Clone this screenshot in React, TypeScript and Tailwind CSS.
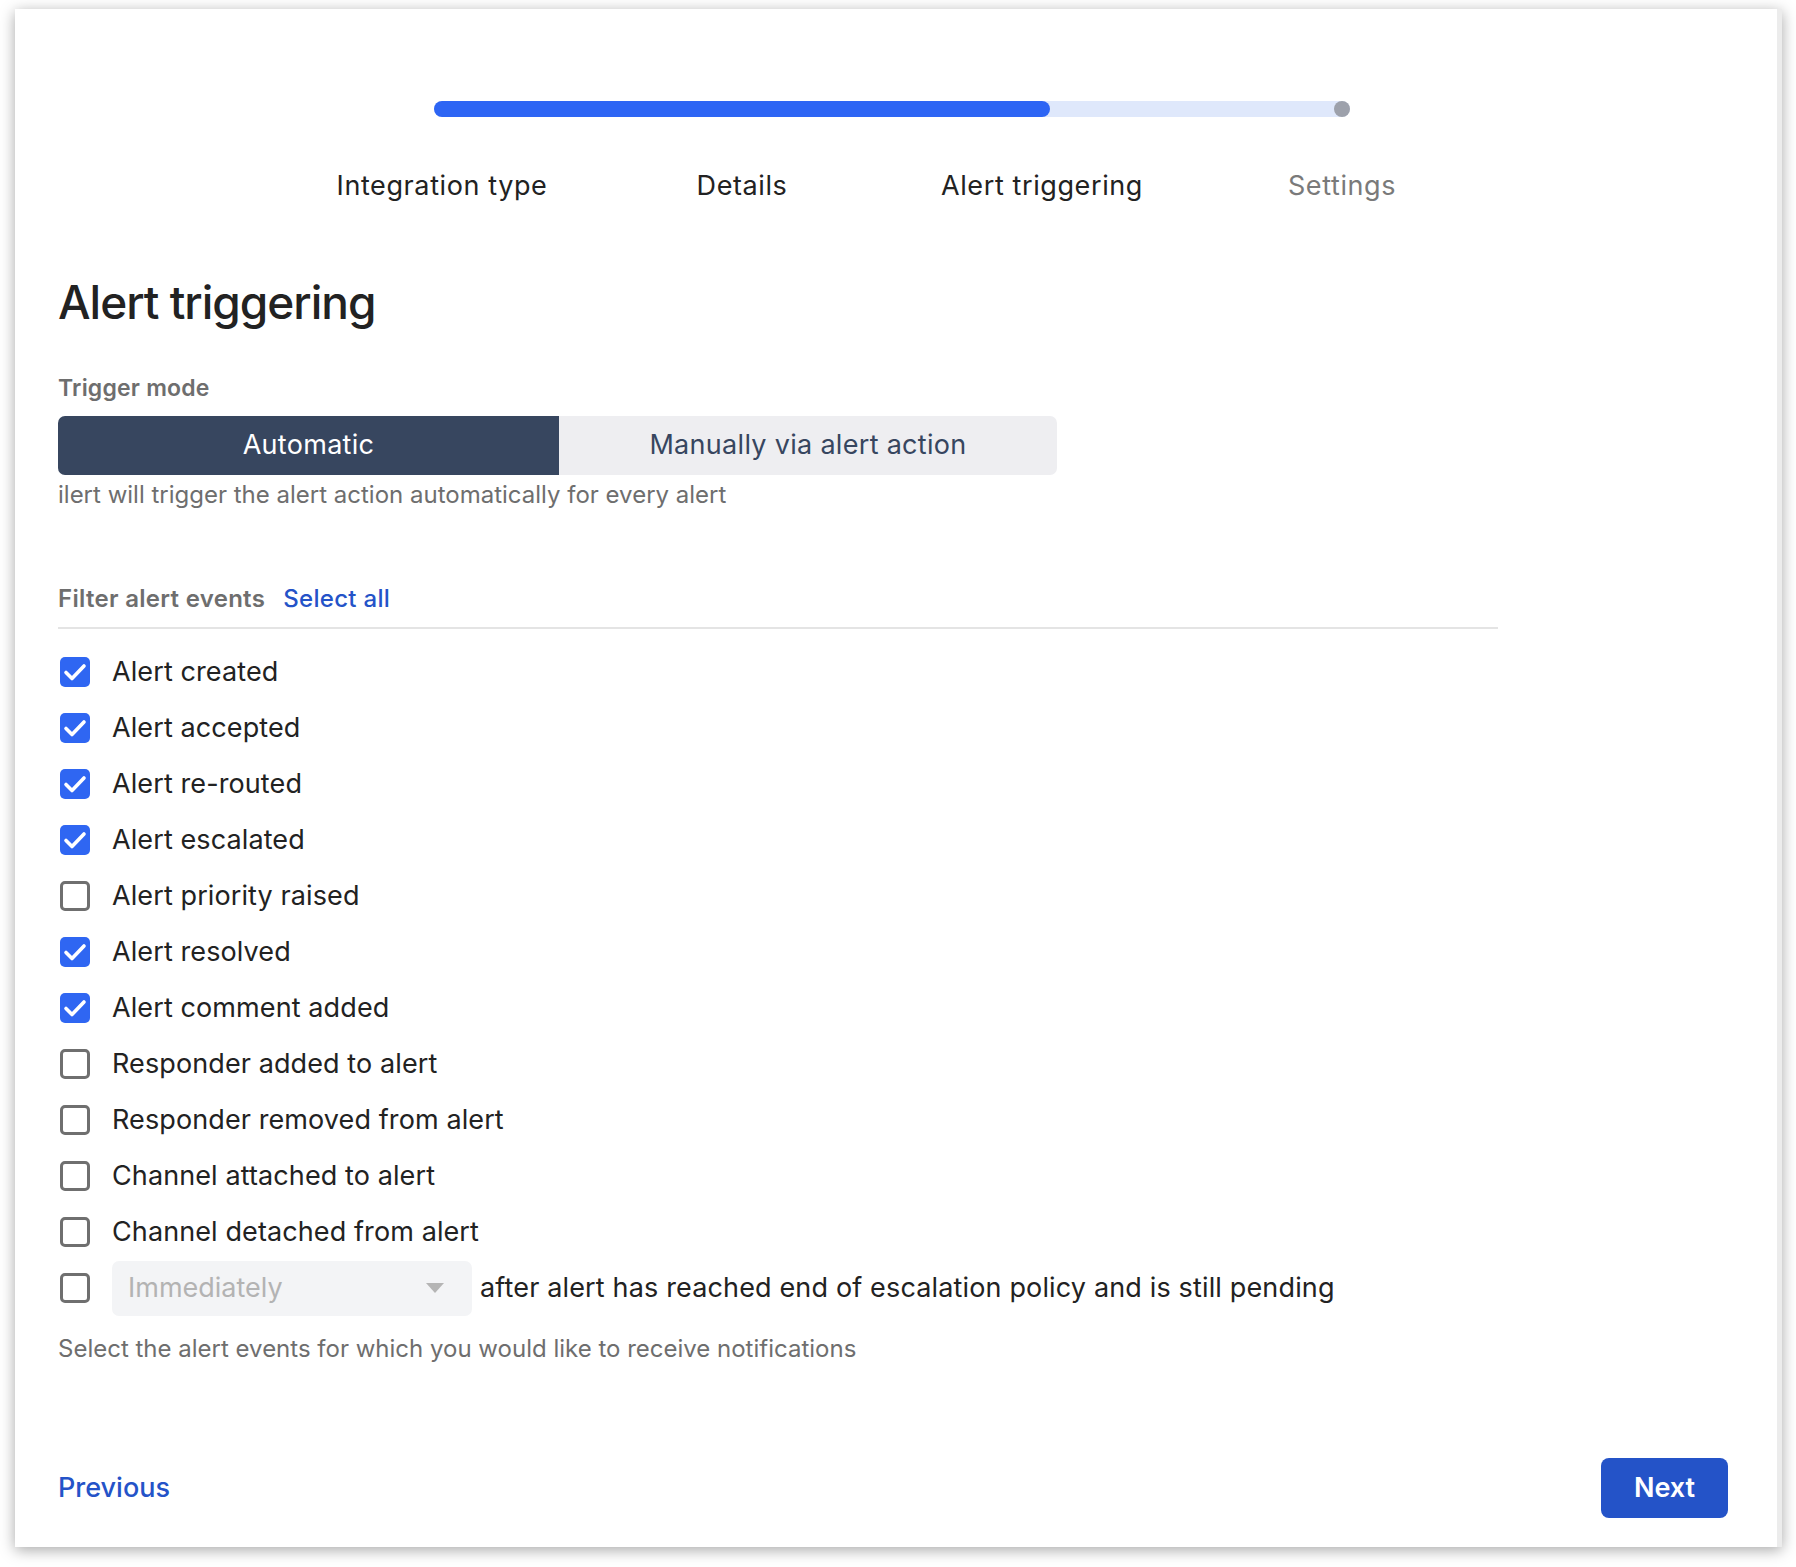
import React from "react";

const rows: { label: string; checked: boolean }[] = [
  { label: "Alert created", checked: true },
  { label: "Alert accepted", checked: true },
  { label: "Alert re-routed", checked: true },
  { label: "Alert escalated", checked: true },
  { label: "Alert priority raised", checked: false },
  { label: "Alert resolved", checked: true },
  { label: "Alert comment added", checked: true },
  { label: "Responder added to alert", checked: false },
  { label: "Responder removed from alert", checked: false },
  { label: "Channel attached to alert", checked: false },
  { label: "Channel detached from alert", checked: false },
];

function Box({ checked }: { checked: boolean }) {
  if (checked) {
    return (
      <div className="w-[30px] h-[30px] rounded-[5px] bg-[#2f66f2] flex items-center justify-center shrink-0">
        <svg width="26" height="26" viewBox="0 0 26 26" fill="none">
          <path d="M4 13.5 L10 19.5 L22 7" stroke="white" strokeWidth="3.6" strokeLinecap="round" strokeLinejoin="round" />
        </svg>
      </div>
    );
  }
  return <div className="w-[30px] h-[30px] rounded-[5px] border-[3px] border-[#6f6f6f] bg-white shrink-0" />;
}

export default function App() {
  return (
    <div className="w-[1796px] h-[1567px] bg-white pt-[9px] pl-[15px] font-['Inter',sans-serif] text-[#222222]">
      <div className="w-[1767px] h-[1538px] bg-white shadow-[0_3px_14px_rgba(0,0,0,0.35)] border-r-[5px] border-[#ececec] pt-[92px] pl-[43px] pr-[44px] flex flex-col">
        {/* progress */}
        <div className="ml-[376px] w-[916px] h-4 rounded-full bg-[#dfe8fb] relative">
          <div className="h-4 w-[616px] rounded-full bg-[#2d65f4]" />
          <div className="absolute right-0 top-0 w-4 h-4 rounded-full bg-[#9da1ab]" />
        </div>
        <div className="ml-[234px] mt-[53px] grid grid-cols-[300px_300px_300px_300px] text-[27px] leading-[32px] tracking-[0.6px]">
          <div className="text-center">Integration type</div>
          <div className="text-center">Details</div>
          <div className="text-center">Alert triggering</div>
          <div className="text-center text-[#7a7a7a]">Settings</div>
        </div>

        <h1 className="mt-[72px] text-[46px] leading-[56px] font-medium tracking-[-1px]">Alert triggering</h1>

        <div className="mt-[43px] text-[23px] leading-[30px] font-semibold text-[#6e6e6e] tracking-[0.2px]">Trigger mode</div>
        <div className="mt-[13px] w-[999px] h-[59px] flex rounded-[7px] overflow-hidden text-[27px] tracking-[0.3px]">
          <div className="w-[501px] bg-[#37465f] text-white flex items-center justify-center">Automatic</div>
          <div className="flex-1 bg-[#eeeef1] text-[#37465f] flex items-center justify-center">Manually via alert action</div>
        </div>
        <div className="mt-[5px] text-[24px] leading-[30px] text-[#6e6e6e]">ilert will trigger the alert action automatically for every alert</div>

        <div className="mt-[74px] flex items-center gap-[18px] text-[24px] leading-[30px] tracking-[0.3px]">
          <span className="font-semibold text-[#6e6e6e]">Filter alert events</span>
          <span className="font-medium text-[#2453c8]">Select all</span>
        </div>
        <div className="mt-[13px] w-[1440px] h-[2px] bg-[#e4e4e4]" />

        <div className="mt-[15px] flex flex-col">
          {rows.map((r) => (
            <div key={r.label} className="h-[56px] flex items-center gap-[22px] pl-[2px]">
              <Box checked={r.checked} />
              <span className="text-[27px] tracking-[0.1px]">{r.label}</span>
            </div>
          ))}
          <div className="h-[56px] flex items-center pl-[2px]">
            <Box checked={false} />
            <div className="ml-[22px] w-[360px] h-[55px] rounded-[7px] bg-[#f3f4f6] flex items-center justify-between pl-[16px] pr-[28px]">
              <span className="text-[27px] text-[#b3b3b3]">Immediately</span>
              <svg width="18" height="10" viewBox="0 0 18 10">
                <path d="M0 0 L18 0 L9 10 Z" fill="#b5b5b5" />
              </svg>
            </div>
            <span className="ml-[8px] text-[27px] tracking-[0.15px]">after alert has reached end of escalation policy and is still pending</span>
          </div>
        </div>

        <div className="mt-[18px] text-[24px] leading-[30px] text-[#6e6e6e]">Select the alert events for which you would like to receive notifications</div>

        <div className="mt-[94px] flex items-center justify-between pr-[5px]">
          <span className="text-[27px] font-medium text-[#2453c8]">Previous</span>
          <button className="w-[127px] h-[60px] rounded-[8px] bg-[#2453c8] text-white text-[27px] font-semibold">Next</button>
        </div>
      </div>
    </div>
  );
}
